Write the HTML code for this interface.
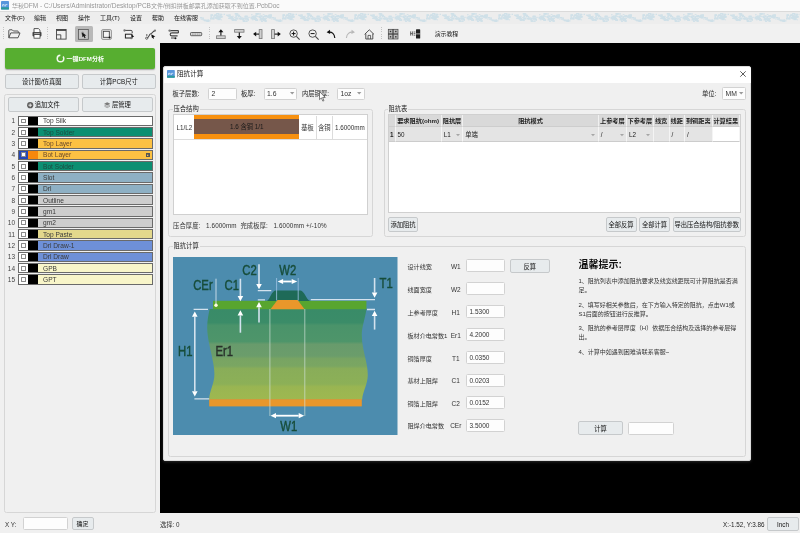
<!DOCTYPE html>
<html lang="zh-CN">
<head>
<meta charset="utf-8">
<title>华秋DFM</title>
<style>
*{box-sizing:border-box;margin:0;padding:0}
html,body{width:800px;height:533px;overflow:hidden;background:#f0f0f0}
body{position:relative;font-family:"Liberation Sans","Noto Sans CJK SC",sans-serif;font-size:6.3px;color:#222;line-height:1}
.a{position:absolute;white-space:nowrap}
.t{position:absolute;white-space:nowrap;line-height:8px;height:8px}
.btn{position:absolute;border:1px solid #c6c9cb;border-radius:2px;background:#e7ebed;text-align:center;white-space:nowrap;color:#111;padding-top:1px}
.inp{position:absolute;background:#fdfdfd;border:1px solid #d2d2d2;border-radius:1.5px;white-space:nowrap;color:#333}
.grp{position:absolute;border:1px solid #d6d6d6;border-radius:2.5px}
.gl{position:absolute;background:#f0f0f0;padding:0 1px;line-height:8px;height:8px;white-space:nowrap;color:#222}
svg{position:absolute;overflow:visible}
.l{font-size:6.55px}
</style>
</head>
<body>
<div id="root" style="position:absolute;left:0;top:0;width:800px;height:533px;will-change:transform;filter:blur(0.35px)">
<div class="a" style="left:0px;top:0px;width:800px;height:11px;background:#fafafa"></div>
<svg style="left:1px;top:1px" width="8" height="8.5" viewBox="0 0 8 8.5"><rect width="8" height="8.5" rx="0.8" fill="#5796dc"/><rect y="6.3" width="8" height="2.2" rx="0.6" fill="#2b9a9a"/><path d="M1.6 5.4V3.6H3.2V5.4M4.6 5.4V3.6H6.4" stroke="#dcecf8" stroke-width="0.8" fill="none"/></svg>
<div class="t" style="left:12px;top:1.5px;color:#969696;font-size:6.0px">华秋<span class="l">DFM - C:/Users/Administrator/Desktop/PCB</span>文件<span class="l">/</span>倒扣拼板邮票孔添加获取不到位置<span class="l">.PcbDoc</span></div>
<div class="a" style="left:0px;top:11px;width:800px;height:13.5px;background:#ededed;border-top:1px solid #dadada;border-bottom:1px solid #dcdcdc"></div>
<svg style="left:200px;top:13px" width="600" height="9" viewBox="0 0 600 9"><defs><pattern id="dz" width="72" height="9" patternUnits="userSpaceOnUse"><g fill="#cfe0e8"><rect x="32.3" y="5.9" width="1.8" height="0.9"/><rect x="34.1" y="4.2" width="1.8" height="0.9"/><rect x="32.3" y="2.7" width="1.3" height="1.8"/><rect x="35.0" y="6.3" width="1.8" height="1.8"/><rect x="30.1" y="4.4" width="1.3" height="0.9"/><rect x="31.0" y="3.2" width="1.3" height="1.3"/><rect x="31.7" y="4.7" width="1.8" height="1.8"/><rect x="17.6" y="2.8" width="2.4" height="1.3"/><rect x="19.3" y="5.2" width="1.3" height="1.8"/><rect x="15.6" y="4.1" width="2.4" height="0.9"/><rect x="14.7" y="4.1" width="3.0" height="0.9"/><rect x="62.7" y="1.2" width="1.8" height="0.9"/><rect x="60.8" y="5.5" width="3.0" height="1.3"/><rect x="58.8" y="4.0" width="2.4" height="1.3"/><rect x="58.9" y="2.7" width="3.0" height="0.9"/><rect x="7.5" y="6.3" width="1.8" height="1.8"/><rect x="10.0" y="4.8" width="1.8" height="1.8"/><rect x="11.0" y="4.7" width="3.0" height="0.9"/><rect x="9.2" y="7.2" width="1.3" height="1.3"/><rect x="61.3" y="8.1" width="1.8" height="0.9"/><rect x="61.7" y="7.9" width="1.3" height="0.9"/><rect x="64.7" y="5.1" width="2.4" height="0.9"/><rect x="63.6" y="5.6" width="2.4" height="1.3"/><rect x="60.1" y="4.6" width="1.8" height="0.9"/><rect x="62.7" y="5.8" width="3.0" height="0.9"/><rect x="64.5" y="6.3" width="1.8" height="1.3"/><rect x="60.6" y="4.9" width="1.8" height="1.8"/><rect x="16.4" y="4.4" width="3.0" height="1.8"/><rect x="15.9" y="0.5" width="1.3" height="0.9"/><rect x="18.0" y="1.4" width="3.0" height="1.3"/><rect x="17.6" y="4.2" width="3.0" height="1.3"/><rect x="18.1" y="4.3" width="1.3" height="0.9"/><rect x="16.6" y="2.7" width="1.3" height="1.3"/><rect x="16.5" y="4.3" width="1.3" height="0.9"/><rect x="16.8" y="2.2" width="1.3" height="0.9"/><rect x="15.1" y="1.5" width="1.8" height="1.3"/><rect x="15.1" y="4.0" width="1.8" height="1.8"/><rect x="10.4" y="1.2" width="2.4" height="1.8"/><rect x="11.7" y="1.3" width="1.3" height="1.3"/><rect x="10.5" y="2.5" width="1.8" height="0.9"/><rect x="10.6" y="3.5" width="1.3" height="1.8"/><rect x="13.9" y="1.7" width="2.4" height="1.3"/><rect x="10.6" y="3.2" width="1.3" height="1.3"/><rect x="68.3" y="2.2" width="3.0" height="1.3"/><rect x="68.4" y="2.1" width="1.3" height="0.9"/><rect x="68.7" y="3.8" width="3.0" height="1.8"/><rect x="67.1" y="3.6" width="3.0" height="1.3"/><rect x="67.8" y="1.8" width="1.3" height="1.3"/><rect x="68.5" y="1.6" width="1.8" height="1.8"/><rect x="66.0" y="2.9" width="3.0" height="1.3"/><rect x="65.4" y="2.0" width="1.8" height="1.3"/><rect x="65.3" y="3.1" width="1.8" height="1.3"/><rect x="64.1" y="2.2" width="3.0" height="0.9"/><rect x="66.4" y="2.8" width="2.4" height="0.9"/><rect x="62.7" y="3.3" width="1.3" height="1.8"/><rect x="2.7" y="6.3" width="1.8" height="1.3"/><rect x="4.0" y="6.5" width="2.4" height="1.8"/><rect x="6.3" y="7.7" width="3.0" height="1.3"/><rect x="2.5" y="4.3" width="1.3" height="1.8"/><rect x="5.7" y="6.7" width="2.4" height="1.8"/><rect x="56.5" y="0.2" width="2.4" height="0.9"/><rect x="58.4" y="2.9" width="1.3" height="1.3"/><rect x="55.0" y="1.8" width="2.4" height="0.9"/><rect x="57.9" y="0.3" width="3.0" height="1.3"/><rect x="55.4" y="0.0" width="3.0" height="1.8"/><rect x="52.8" y="2.6" width="1.8" height="1.3"/><rect x="53.2" y="3.3" width="1.8" height="0.9"/><rect x="51.0" y="4.1" width="3.0" height="0.9"/><rect x="51.2" y="1.1" width="1.3" height="1.3"/><rect x="51.7" y="3.1" width="2.4" height="1.3"/><rect x="50.6" y="4.5" width="1.3" height="1.8"/><rect x="60.9" y="7.3" width="1.3" height="1.3"/><rect x="62.5" y="6.8" width="2.4" height="1.3"/><rect x="64.4" y="7.1" width="2.4" height="1.8"/><rect x="60.3" y="5.2" width="3.0" height="1.3"/><rect x="34.7" y="0.0" width="2.4" height="1.8"/><rect x="36.5" y="0.1" width="1.8" height="1.8"/><rect x="37.1" y="1.7" width="3.0" height="1.3"/><rect x="35.5" y="2.5" width="1.8" height="1.3"/><rect x="38.6" y="3.1" width="2.4" height="1.3"/><rect x="38.8" y="5.0" width="1.8" height="1.3"/><rect x="39.7" y="5.0" width="2.4" height="1.8"/><rect x="37.9" y="2.6" width="1.3" height="1.8"/><rect x="35.4" y="2.4" width="1.3" height="1.8"/><rect x="40.0" y="3.1" width="1.3" height="1.3"/><rect x="35.9" y="1.5" width="3.0" height="1.3"/><rect x="40.0" y="4.3" width="3.0" height="1.3"/><rect x="17.4" y="5.4" width="3.0" height="1.8"/><rect x="16.8" y="2.6" width="1.3" height="1.3"/><rect x="15.9" y="5.2" width="1.3" height="0.9"/><rect x="16.2" y="2.8" width="2.4" height="1.3"/><rect x="18.8" y="2.8" width="3.0" height="0.9"/><rect x="17.7" y="4.3" width="2.4" height="1.8"/><rect x="11.9" y="4.7" width="1.8" height="1.8"/><rect x="12.8" y="4.7" width="1.8" height="1.8"/><rect x="12.8" y="4.3" width="1.8" height="0.9"/><rect x="16.3" y="4.7" width="2.4" height="0.9"/><rect x="13.3" y="3.3" width="1.8" height="0.9"/><rect x="15.6" y="2.8" width="1.3" height="0.9"/><rect x="16.2" y="2.5" width="1.3" height="1.3"/><rect x="28.1" y="4.6" width="1.8" height="1.3"/><rect x="28.6" y="5.0" width="1.3" height="0.9"/><rect x="28.3" y="3.0" width="2.4" height="0.9"/><rect x="29.0" y="4.3" width="2.4" height="1.8"/><rect x="30.4" y="5.1" width="1.3" height="1.3"/><rect x="26.0" y="1.6" width="3.0" height="0.9"/><rect x="26.4" y="2.0" width="1.8" height="0.9"/><rect x="71.7" y="4.5" width="3.0" height="0.9"/><rect x="0.6" y="5.4" width="3.0" height="1.3"/><rect x="71.4" y="5.8" width="2.4" height="0.9"/><rect x="72.0" y="4.1" width="1.8" height="0.9"/><rect x="28.9" y="2.0" width="1.8" height="0.9"/><rect x="29.4" y="1.2" width="1.3" height="1.8"/><rect x="31.3" y="5.1" width="3.0" height="1.8"/><rect x="29.9" y="3.3" width="2.4" height="1.3"/><rect x="28.3" y="1.6" width="1.8" height="1.3"/><rect x="27.5" y="2.5" width="2.4" height="1.3"/><rect x="52.9" y="2.8" width="3.0" height="0.9"/><rect x="52.6" y="2.9" width="1.3" height="0.9"/><rect x="54.0" y="5.6" width="2.4" height="1.3"/><rect x="53.7" y="3.1" width="1.8" height="1.8"/><rect x="53.0" y="3.6" width="3.0" height="1.8"/><rect x="17.8" y="0.0" width="1.3" height="1.8"/><rect x="14.0" y="1.9" width="1.3" height="0.9"/><rect x="16.1" y="0.0" width="2.4" height="1.3"/><rect x="14.2" y="1.4" width="3.0" height="1.8"/><rect x="15.7" y="4.3" width="3.0" height="1.8"/><rect x="13.2" y="2.5" width="1.3" height="1.3"/><rect x="17.5" y="0.6" width="3.0" height="0.9"/><rect x="59.4" y="6.2" width="3.0" height="1.3"/><rect x="61.7" y="4.6" width="2.4" height="1.8"/><rect x="60.5" y="4.9" width="2.4" height="1.8"/><rect x="62.7" y="3.3" width="1.3" height="0.9"/><rect x="62.0" y="4.8" width="3.0" height="1.8"/><rect x="61.1" y="6.0" width="3.0" height="0.9"/><rect x="62.0" y="5.2" width="2.4" height="0.9"/><rect x="63.1" y="3.0" width="3.0" height="1.3"/><rect x="68.1" y="4.1" width="3.0" height="0.9"/><rect x="0.5" y="4.1" width="1.3" height="0.9"/><rect x="70.7" y="2.5" width="1.8" height="0.9"/><rect x="69.4" y="1.2" width="2.4" height="1.3"/><rect x="68.3" y="2.4" width="2.4" height="1.8"/><rect x="70.5" y="2.4" width="1.8" height="1.3"/><rect x="71.2" y="1.6" width="1.3" height="1.8"/><rect x="0.0" y="4.0" width="2.4" height="1.3"/><rect x="20.5" y="3.6" width="2.4" height="0.9"/><rect x="18.0" y="3.8" width="1.8" height="1.8"/><rect x="17.2" y="3.0" width="2.4" height="1.3"/><rect x="19.2" y="5.5" width="1.3" height="0.9"/><rect x="19.8" y="3.0" width="1.3" height="1.8"/><rect x="17.9" y="3.8" width="2.4" height="1.3"/><rect x="19.4" y="3.7" width="2.4" height="1.3"/><rect x="20.8" y="6.4" width="1.3" height="0.9"/><rect x="31.9" y="6.7" width="3.0" height="0.9"/><rect x="31.6" y="6.3" width="2.4" height="1.3"/><rect x="32.4" y="6.7" width="1.8" height="1.3"/><rect x="33.0" y="6.0" width="3.0" height="1.3"/><rect x="30.1" y="3.8" width="3.0" height="1.8"/><rect x="31.3" y="4.4" width="1.3" height="1.8"/><rect x="32.4" y="6.6" width="2.4" height="1.3"/><rect x="35.3" y="4.4" width="2.4" height="1.3"/><rect x="35.4" y="4.8" width="3.0" height="1.8"/><rect x="42.5" y="7.3" width="2.4" height="1.3"/><rect x="41.9" y="5.6" width="1.8" height="0.9"/><rect x="42.1" y="5.4" width="2.4" height="1.8"/><rect x="42.3" y="5.5" width="1.8" height="1.8"/><rect x="43.1" y="7.2" width="1.8" height="1.8"/><rect x="43.1" y="4.6" width="3.0" height="1.3"/><rect x="58.7" y="2.9" width="1.3" height="1.8"/><rect x="60.2" y="2.3" width="2.4" height="1.8"/><rect x="56.4" y="0.8" width="1.3" height="1.3"/><rect x="56.4" y="3.2" width="1.8" height="0.9"/><rect x="54.8" y="4.7" width="2.4" height="1.3"/><rect x="53.2" y="4.0" width="2.4" height="1.8"/><rect x="51.9" y="4.7" width="1.3" height="1.8"/><rect x="54.3" y="2.7" width="2.4" height="0.9"/><rect x="55.2" y="6.2" width="3.0" height="1.8"/><rect x="47.6" y="3.8" width="3.0" height="0.9"/><rect x="44.8" y="2.6" width="3.0" height="1.8"/><rect x="44.4" y="2.8" width="3.0" height="1.8"/><rect x="45.1" y="6.2" width="1.3" height="1.3"/><rect x="23.6" y="0.7" width="1.3" height="1.3"/><rect x="19.8" y="2.0" width="1.3" height="1.3"/><rect x="20.3" y="0.7" width="1.8" height="1.8"/><rect x="20.9" y="3.0" width="1.8" height="1.3"/><rect x="20.6" y="1.1" width="1.8" height="1.3"/><rect x="45.0" y="5.2" width="3.0" height="1.3"/><rect x="45.9" y="7.4" width="1.3" height="1.3"/><rect x="46.9" y="5.8" width="1.8" height="0.9"/><rect x="46.6" y="5.7" width="2.4" height="0.9"/><rect x="45.9" y="5.1" width="1.3" height="1.3"/><rect x="47.2" y="6.0" width="1.8" height="1.8"/><rect x="44.7" y="7.9" width="3.0" height="0.9"/><rect x="46.5" y="4.6" width="1.8" height="1.8"/><rect x="53.6" y="3.1" width="1.8" height="0.9"/><rect x="51.9" y="6.4" width="1.8" height="0.9"/><rect x="51.3" y="3.6" width="1.3" height="1.3"/><rect x="54.4" y="2.8" width="2.4" height="0.9"/><rect x="54.8" y="4.2" width="1.3" height="1.3"/><rect x="51.9" y="4.8" width="3.0" height="0.9"/><rect x="55.6" y="6.6" width="2.4" height="1.3"/><rect x="52.9" y="4.8" width="3.0" height="1.8"/></g></pattern></defs><rect width="600" height="9" fill="url(#dz)"/></svg>
<div class="t" style="left:5px;top:13.5px;color:#111;font-size:6.0px">文件(F)</div>
<div class="t" style="left:34px;top:13.5px;color:#111;font-size:6.0px">编辑</div>
<div class="t" style="left:56px;top:13.5px;color:#111;font-size:6.0px">视图</div>
<div class="t" style="left:78px;top:13.5px;color:#111;font-size:6.0px">操作</div>
<div class="t" style="left:100px;top:13.5px;color:#111;font-size:6.0px">工具(T)</div>
<div class="t" style="left:130px;top:13.5px;color:#111;font-size:6.0px">设置</div>
<div class="t" style="left:152px;top:13.5px;color:#111;font-size:6.0px">帮助</div>
<div class="t" style="left:174px;top:13.5px;color:#111;font-size:6.0px">在线客服</div>
<div class="a" style="left:0px;top:24px;width:800px;height:19px;background:#f1f1f1"></div>
<div class="a" style="left:2.5px;top:27px;width:1px;height:13px;background:repeating-linear-gradient(#c4c4c4 0 1px,transparent 1px 2.2px)"></div>
<div class="a" style="left:46.5px;top:27px;width:1px;height:13px;background:repeating-linear-gradient(#c4c4c4 0 1px,transparent 1px 2.2px)"></div>
<div class="a" style="left:209px;top:27px;width:1px;height:13px;background:repeating-linear-gradient(#c4c4c4 0 1px,transparent 1px 2.2px)"></div>
<div class="a" style="left:380.5px;top:27px;width:1px;height:13px;background:repeating-linear-gradient(#c4c4c4 0 1px,transparent 1px 2.2px)"></div>
<svg style="left:8px;top:28.5px" width="13" height="10" viewBox="0 0 13 10"><path d="M0.8 8.6V1.6Q0.8 0.8 1.6 0.8H4.2L5.4 2H9.6Q10.3 2 10.3 2.8V3.8" fill="none" stroke="#444" stroke-width="0.9"/><path d="M0.8 8.8L2.8 3.9H12L10 8.8Z" fill="none" stroke="#444" stroke-width="0.9" stroke-linejoin="round"/></svg>
<svg style="left:32px;top:28px" width="10" height="11" viewBox="0 0 10 11"><path d="M2 4V0.6H6.4L8 2.2V4" fill="#fff" stroke="#444" stroke-width="0.9"/><rect x="0.5" y="4" width="9" height="4.4" rx="0.8" fill="#444"/><rect x="2" y="6.6" width="6" height="3.6" fill="#fff" stroke="#444" stroke-width="0.8"/><path d="M2.2 5.4H7.8" stroke="#fff" stroke-width="0.6"/></svg>
<svg style="left:56px;top:28.5px" width="11" height="11" viewBox="0 0 11 11"><rect x="0.5" y="0.5" width="9.6" height="9.6" fill="none" stroke="#444" stroke-width="0.9"/><path d="M0.5 1.2H10.1" stroke="#444" stroke-width="1.4"/><path d="M0.5 5.8H4.8V10.1" fill="none" stroke="#444" stroke-width="0.9"/></svg>
<div class="a" style="left:74.5px;top:26px;width:18px;height:15.5px;background:#b9b9b9;border-radius:1.5px"></div>
<svg style="left:78px;top:28.5px" width="11" height="11" viewBox="0 0 11 11"><rect x="0.5" y="0.5" width="9.8" height="9.8" fill="#c6c6c6" stroke="#555" stroke-width="0.8"/><circle cx="4.6" cy="4.2" r="1.6" fill="#999"/><path d="M4 3.4L8.4 6.4L6.6 6.8L7.6 8.8L6.6 9.2L5.7 7.2L4.4 8.2Z" fill="#111"/></svg>
<svg style="left:100.5px;top:28.5px" width="11" height="11" viewBox="0 0 11 11"><rect x="0.5" y="0.5" width="10" height="10" rx="1.6" fill="#dedede" stroke="#8a8a8a" stroke-width="0.8"/><rect x="2.3" y="2.3" width="6" height="6" fill="#f6f6f6" stroke="#3a3a3a" stroke-width="0.85"/><circle cx="8.6" cy="8.5" r="1" fill="#111"/></svg>
<svg style="left:123px;top:28.5px" width="12" height="11" viewBox="0 0 12 11"><path d="M1.4 1.4H8Q9.2 1.4 9.2 2.6V4" fill="none" stroke="#444" stroke-width="1"/><rect x="2.4" y="5.2" width="6.6" height="3.8" fill="none" stroke="#222" stroke-width="1"/><circle cx="1.5" cy="1.5" r="1.15" fill="#777"/><circle cx="8.2" cy="9.2" r="1.1" fill="#777"/><path d="M8.4 5.4L11.2 7.4L8.8 8.4Z" fill="#111"/></svg>
<svg style="left:145px;top:28.5px" width="12" height="11" viewBox="0 0 12 11"><path d="M1.8 9C4.4 8.8 3.6 5.4 5.8 4.8C8 4.2 7.4 2.2 10 1.6" fill="none" stroke="#444" stroke-width="1.1"/><circle cx="1.7" cy="9.2" r="1.1" fill="#eee" stroke="#444" stroke-width="0.8"/><circle cx="1.8" cy="6" r="0.8" fill="#444"/><circle cx="10" cy="1.6" r="1.1" fill="#777"/><path d="M6.2 5.2L10.4 7.4L8.6 8L9 10L6.8 8.6Z" fill="#111"/></svg>
<svg style="left:168px;top:28.5px" width="12" height="11" viewBox="0 0 12 11"><path d="M1.6 1.6H10.4M3.6 3.9H10.4M10.4 1.6V3.9M3.8 3.9Q2.2 4 2.2 5.4Q2.2 6.8 3.8 6.8H9.6" fill="none" stroke="#444" stroke-width="1.15"/><path d="M3 9H6.6" stroke="#444" stroke-width="1"/><circle cx="1.6" cy="1.6" r="1.2" fill="#777"/><circle cx="7.4" cy="9.2" r="1.05" fill="#111"/></svg>
<svg style="left:190px;top:31.6px" width="13" height="5" viewBox="0 0 13 5"><rect x="0.5" y="0.5" width="11.2" height="3.2" rx="0.8" fill="#d8d8d8" stroke="#444" stroke-width="0.8"/><path d="M2 2.1H10.2" stroke="#888" stroke-width="0.7" stroke-dasharray="1.6 0.8"/></svg>
<svg style="left:216px;top:28.5px" width="10" height="11" viewBox="0 0 10 11"><rect x="0.6" y="6.8" width="8.6" height="2.8" fill="#d0d0d0" stroke="#777" stroke-width="0.8"/><path d="M4.9 6.6V2.6" stroke="#111" stroke-width="1.1"/><path d="M4.9 0.2L7.4 3.2H2.4Z" fill="#111"/></svg>
<svg style="left:234px;top:28.5px" width="11" height="11" viewBox="0 0 11 11"><rect x="0.6" y="0.6" width="9.4" height="2.6" fill="#d0d0d0" stroke="#777" stroke-width="0.8"/><path d="M5.3 3.4V7.4" stroke="#111" stroke-width="1.1"/><path d="M5.3 10L7.8 7H2.8Z" fill="#111"/></svg>
<svg style="left:253px;top:28.5px" width="11" height="11" viewBox="0 0 11 11"><rect x="6.2" y="0.6" width="2.8" height="9" fill="#d0d0d0" stroke="#777" stroke-width="0.8"/><path d="M6 5.1H2.6" stroke="#111" stroke-width="1.1"/><path d="M0.1 5.1L3.2 2.7V7.5Z" fill="#111"/></svg>
<svg style="left:271px;top:28.5px" width="11" height="11" viewBox="0 0 11 11"><rect x="0.6" y="0.6" width="2.8" height="9" fill="#d0d0d0" stroke="#777" stroke-width="0.8"/><path d="M3.6 5.1H7.2" stroke="#111" stroke-width="1.1"/><path d="M9.8 5.1L6.7 2.7V7.5Z" fill="#111"/></svg>
<svg style="left:289px;top:28.5px" width="12" height="12" viewBox="0 0 12 12"><circle cx="4.6" cy="4.6" r="3.7" fill="none" stroke="#444" stroke-width="0.9"/><path d="M7.4 7.4L10.6 10.6" stroke="#444" stroke-width="1.1"/><path d="M2.6 4.6H6.6M4.6 2.6V6.6" stroke="#111" stroke-width="1"/></svg>
<svg style="left:308px;top:28.5px" width="12" height="12" viewBox="0 0 12 12"><circle cx="4.6" cy="4.6" r="3.7" fill="none" stroke="#444" stroke-width="0.9"/><path d="M7.4 7.4L10.6 10.6" stroke="#444" stroke-width="1.1"/><path d="M2.6 4.6H6.6" stroke="#111" stroke-width="1"/></svg>
<svg style="left:326px;top:28.5px" width="11" height="11" viewBox="0 0 11 11"><path d="M2.6 3.2C6 2.6 8.6 5 8.8 9" fill="none" stroke="#111" stroke-width="1.2"/><path d="M0.6 3.2L4 0.8L4.2 5Z" fill="#111"/></svg>
<svg style="left:344.5px;top:28.5px" width="11" height="11" viewBox="0 0 11 11"><path d="M8 3.2C4.6 2.6 1.6 5 1.4 9" fill="none" stroke="#b8b8b8" stroke-width="1.1"/><path d="M10 3.2L6.6 0.8L6.4 5Z" fill="#b8b8b8"/></svg>
<svg style="left:363.5px;top:28.5px" width="11" height="11" viewBox="0 0 11 11"><path d="M0.6 5.4L5.3 0.8L10 5.4" fill="none" stroke="#444" stroke-width="0.9" stroke-linejoin="round"/><path d="M1.8 4.6V10H8.8V4.6" fill="none" stroke="#444" stroke-width="0.9"/><path d="M4 10V6.4H6.6V10" fill="none" stroke="#444" stroke-width="0.8"/></svg>
<svg style="left:387.5px;top:29px" width="11" height="11" viewBox="0 0 11 11"><rect x="0.3" y="0.3" width="4.4" height="4.4" fill="#bdbdbd" stroke="#444" stroke-width="0.7"/><rect x="1.8" y="1.8" width="1.4" height="1.4" fill="#333"/><rect x="5.6" y="0.3" width="4.4" height="4.4" fill="#bdbdbd" stroke="#444" stroke-width="0.7"/><rect x="7.1" y="1.8" width="1.4" height="1.4" fill="#333"/><rect x="0.3" y="5.6" width="4.4" height="4.4" fill="#bdbdbd" stroke="#444" stroke-width="0.7"/><rect x="1.8" y="7.1" width="1.4" height="1.4" fill="#333"/><rect x="5.6" y="5.6" width="4.4" height="4.4" fill="#bdbdbd" stroke="#444" stroke-width="0.7"/><rect x="7.1" y="7.1" width="1.4" height="1.4" fill="#333"/></svg>
<svg style="left:410px;top:29px" width="11" height="10" viewBox="0 0 11 10"><rect x="6" y="0.3" width="4.2" height="9.2" rx="0.6" fill="#222"/><path d="M6 4.9H10.2" stroke="#eee" stroke-width="0.7"/><path d="M0.6 2.4V6.6M0.6 4.6H2.4M2.4 2.4V6.6M3.6 3H5.4M3.6 4.6H5.4M3.6 6.2H5.4" stroke="#333" stroke-width="0.7" fill="none"/></svg>
<div class="t" style="left:434.7px;top:30px;color:#111;font-size:5.9px">演示教程</div>

<div class="a" style="left:160px;top:43px;width:640px;height:470px;background:#000"></div>
<div class="a" style="left:5px;top:48px;width:150px;height:20.5px;background:#57ae30;border-radius:2px;box-shadow:0 1px 1.5px rgba(0,0,0,.35)"></div>
<div class="t" style="left:66.5px;top:54.5px;color:#fff;font-weight:bold;font-size:6.1px">一键DFM分析</div>
<svg style="left:55.5px;top:54px" width="9" height="9" viewBox="0 0 9 9"><circle cx="4.5" cy="4.5" r="3.3" fill="none" stroke="#fff" stroke-width="1.5" stroke-dasharray="15 3" opacity="0.92"/></svg>
<div class="btn" style="left:5px;top:74px;width:73.5px;height:14.5px;line-height:12.5px">设计图/仿真图</div>
<div class="btn" style="left:82px;top:74px;width:73.5px;height:14.5px;line-height:12.5px">计算PCB尺寸</div>
<div class="grp" style="left:4px;top:94px;width:152px;height:419px;"></div>
<div class="btn" style="left:8px;top:97px;width:70.5px;height:14.5px;line-height:12.5px"><svg style="position:static;vertical-align:-1.3px;margin-right:1.6px" width="6.4" height="6.4" viewBox="0 0 6.4 6.4"><circle cx="3.2" cy="3.2" r="3.1" fill="#5e5e5e"/><path d="M1.4 3.2H5M3.2 1.4V5" stroke="#f4f4f4" stroke-width="0.9"/></svg>追加文件</div>
<div class="btn" style="left:82px;top:97px;width:70.5px;height:14.5px;line-height:12.5px"><svg style="position:static;vertical-align:-1px;margin-right:2px" width="6.4" height="6" viewBox="0 0 6.4 6"><path d="M3.2 0.2L6.2 1.8L3.2 3.4L0.2 1.8Z" fill="#7a7a7a"/><path d="M0.4 3L3.2 4.5L6 3M0.4 4.2L3.2 5.7L6 4.2" stroke="#8a8a8a" stroke-width="0.7" fill="none"/></svg>层管理</div>
<div class="t" style="left:3px;width:12px;text-align:right;top:117.39999999999999px;font-size:6.5px;color:#444">1</div>
<div class="a" style="left:18px;top:115.6px;width:135px;height:10.4px;border:1px solid #6a6a6a;background:#ffffff"></div>
<div class="a" style="left:19px;top:116.6px;width:8.6px;height:8.4px;background:#fff"></div>
<div class="a" style="left:20.9px;top:118.5px;width:4.8px;height:4.8px;border:0.8px solid #8a8a8a;background:#fff;border-radius:0.5px"></div>
<div class="a" style="left:27.6px;top:116.6px;width:10.4px;height:8.4px;background:#000"></div>
<div class="t" style="left:43px;top:117.3px;font-size:6.6px;color:#3a3a3a">Top Silk</div>
<div class="t" style="left:3px;width:12px;text-align:right;top:128.73000000000002px;font-size:6.5px;color:#444">2</div>
<div class="a" style="left:18px;top:126.93px;width:135px;height:10.4px;border:1px solid #6a6a6a;background:#0c8f72"></div>
<div class="a" style="left:19px;top:127.93px;width:8.6px;height:8.4px;background:#fff"></div>
<div class="a" style="left:20.9px;top:129.83px;width:4.8px;height:4.8px;border:0.8px solid #8a8a8a;background:#fff;border-radius:0.5px"></div>
<div class="a" style="left:27.6px;top:127.93px;width:10.4px;height:8.4px;background:#000"></div>
<div class="t" style="left:43px;top:128.63px;font-size:6.6px;color:#1d4a40">Top Solder</div>
<div class="t" style="left:3px;width:12px;text-align:right;top:140.06px;font-size:6.5px;color:#444">3</div>
<div class="a" style="left:18px;top:138.26px;width:135px;height:10.4px;border:1px solid #6a6a6a;background:#fcc143"></div>
<div class="a" style="left:19px;top:139.26px;width:8.6px;height:8.4px;background:#fff"></div>
<div class="a" style="left:20.9px;top:141.16px;width:4.8px;height:4.8px;border:0.8px solid #8a8a8a;background:#fff;border-radius:0.5px"></div>
<div class="a" style="left:27.6px;top:139.26px;width:10.4px;height:8.4px;background:#000"></div>
<div class="t" style="left:43px;top:139.95999999999998px;font-size:6.6px;color:#6b4a2a">Top Layer</div>
<div class="t" style="left:3px;width:12px;text-align:right;top:151.39000000000001px;font-size:6.5px;color:#444">4</div>
<div class="a" style="left:18px;top:149.59px;width:135px;height:10.4px;border:1px solid #6a6a6a;background:#fcc143"></div>
<div class="a" style="left:19px;top:150.59px;width:8.6px;height:8.4px;background:#2447b8"></div>
<div class="a" style="left:20.9px;top:152.49px;width:4.8px;height:4.8px;border:0.8px solid #8a8a8a;background:#fff;border-radius:0.5px"></div>
<div class="a" style="left:27.6px;top:150.59px;width:10.4px;height:8.4px;background:#f7880c"></div>
<div class="t" style="left:43px;top:151.29px;font-size:6.6px;color:#6b4a2a">Bot Layer</div>
<div class="a" style="left:146px;top:152.79px;width:4px;height:4px;border:0.7px solid #555;background:linear-gradient(#555,#555) 50% 0/0.7px 100% no-repeat,linear-gradient(#555,#555) 0 50%/100% 0.7px no-repeat"></div>
<div class="t" style="left:3px;width:12px;text-align:right;top:162.72px;font-size:6.5px;color:#444">5</div>
<div class="a" style="left:18px;top:160.92px;width:135px;height:10.4px;border:1px solid #6a6a6a;background:#0c8f72"></div>
<div class="a" style="left:19px;top:161.92px;width:8.6px;height:8.4px;background:#fff"></div>
<div class="a" style="left:20.9px;top:163.82px;width:4.8px;height:4.8px;border:0.8px solid #8a8a8a;background:#fff;border-radius:0.5px"></div>
<div class="a" style="left:27.6px;top:161.92px;width:10.4px;height:8.4px;background:#000"></div>
<div class="t" style="left:43px;top:162.61999999999998px;font-size:6.6px;color:#1d4a40">Bot Solder</div>
<div class="t" style="left:3px;width:12px;text-align:right;top:174.05px;font-size:6.5px;color:#444">6</div>
<div class="a" style="left:18px;top:172.25px;width:135px;height:10.4px;border:1px solid #6a6a6a;background:#8eb0c4"></div>
<div class="a" style="left:19px;top:173.25px;width:8.6px;height:8.4px;background:#fff"></div>
<div class="a" style="left:20.9px;top:175.15px;width:4.8px;height:4.8px;border:0.8px solid #8a8a8a;background:#fff;border-radius:0.5px"></div>
<div class="a" style="left:27.6px;top:173.25px;width:10.4px;height:8.4px;background:#000"></div>
<div class="t" style="left:43px;top:173.95px;font-size:6.6px;color:#3a3a3a">Slot</div>
<div class="t" style="left:3px;width:12px;text-align:right;top:185.38000000000002px;font-size:6.5px;color:#444">7</div>
<div class="a" style="left:18px;top:183.58px;width:135px;height:10.4px;border:1px solid #6a6a6a;background:#8eb0c4"></div>
<div class="a" style="left:19px;top:184.58px;width:8.6px;height:8.4px;background:#fff"></div>
<div class="a" style="left:20.9px;top:186.48000000000002px;width:4.8px;height:4.8px;border:0.8px solid #8a8a8a;background:#fff;border-radius:0.5px"></div>
<div class="a" style="left:27.6px;top:184.58px;width:10.4px;height:8.4px;background:#000"></div>
<div class="t" style="left:43px;top:185.28px;font-size:6.6px;color:#3a3a3a">Drl</div>
<div class="t" style="left:3px;width:12px;text-align:right;top:196.71px;font-size:6.5px;color:#444">8</div>
<div class="a" style="left:18px;top:194.91px;width:135px;height:10.4px;border:1px solid #6a6a6a;background:#cdcdcd"></div>
<div class="a" style="left:19px;top:195.91px;width:8.6px;height:8.4px;background:#fff"></div>
<div class="a" style="left:20.9px;top:197.81px;width:4.8px;height:4.8px;border:0.8px solid #8a8a8a;background:#fff;border-radius:0.5px"></div>
<div class="a" style="left:27.6px;top:195.91px;width:10.4px;height:8.4px;background:#000"></div>
<div class="t" style="left:43px;top:196.60999999999999px;font-size:6.6px;color:#3a3a3a">Outline</div>
<div class="t" style="left:3px;width:12px;text-align:right;top:208.04000000000002px;font-size:6.5px;color:#444">9</div>
<div class="a" style="left:18px;top:206.24px;width:135px;height:10.4px;border:1px solid #6a6a6a;background:#cdcdcd"></div>
<div class="a" style="left:19px;top:207.24px;width:8.6px;height:8.4px;background:#fff"></div>
<div class="a" style="left:20.9px;top:209.14000000000001px;width:4.8px;height:4.8px;border:0.8px solid #8a8a8a;background:#fff;border-radius:0.5px"></div>
<div class="a" style="left:27.6px;top:207.24px;width:10.4px;height:8.4px;background:#000"></div>
<div class="t" style="left:43px;top:207.94px;font-size:6.6px;color:#3a3a3a">gm1</div>
<div class="t" style="left:3px;width:12px;text-align:right;top:219.37px;font-size:6.5px;color:#444">10</div>
<div class="a" style="left:18px;top:217.57px;width:135px;height:10.4px;border:1px solid #6a6a6a;background:#cdcdcd"></div>
<div class="a" style="left:19px;top:218.57px;width:8.6px;height:8.4px;background:#fff"></div>
<div class="a" style="left:20.9px;top:220.47px;width:4.8px;height:4.8px;border:0.8px solid #8a8a8a;background:#fff;border-radius:0.5px"></div>
<div class="a" style="left:27.6px;top:218.57px;width:10.4px;height:8.4px;background:#000"></div>
<div class="t" style="left:43px;top:219.26999999999998px;font-size:6.6px;color:#3a3a3a">gm2</div>
<div class="t" style="left:3px;width:12px;text-align:right;top:230.70000000000002px;font-size:6.5px;color:#444">11</div>
<div class="a" style="left:18px;top:228.9px;width:135px;height:10.4px;border:1px solid #6a6a6a;background:#e3d88c"></div>
<div class="a" style="left:19px;top:229.9px;width:8.6px;height:8.4px;background:#fff"></div>
<div class="a" style="left:20.9px;top:231.8px;width:4.8px;height:4.8px;border:0.8px solid #8a8a8a;background:#fff;border-radius:0.5px"></div>
<div class="a" style="left:27.6px;top:229.9px;width:10.4px;height:8.4px;background:#000"></div>
<div class="t" style="left:43px;top:230.6px;font-size:6.6px;color:#3a3a3a">Top Paste</div>
<div class="t" style="left:3px;width:12px;text-align:right;top:242.03px;font-size:6.5px;color:#444">12</div>
<div class="a" style="left:18px;top:240.23px;width:135px;height:10.4px;border:1px solid #6a6a6a;background:#6e90d8"></div>
<div class="a" style="left:19px;top:241.23px;width:8.6px;height:8.4px;background:#fff"></div>
<div class="a" style="left:20.9px;top:243.13px;width:4.8px;height:4.8px;border:0.8px solid #8a8a8a;background:#fff;border-radius:0.5px"></div>
<div class="a" style="left:27.6px;top:241.23px;width:10.4px;height:8.4px;background:#000"></div>
<div class="t" style="left:43px;top:241.92999999999998px;font-size:6.6px;color:#3a3a3a">Drl Draw-1</div>
<div class="t" style="left:3px;width:12px;text-align:right;top:253.36px;font-size:6.5px;color:#444">13</div>
<div class="a" style="left:18px;top:251.56px;width:135px;height:10.4px;border:1px solid #6a6a6a;background:#6e90d8"></div>
<div class="a" style="left:19px;top:252.56px;width:8.6px;height:8.4px;background:#fff"></div>
<div class="a" style="left:20.9px;top:254.46px;width:4.8px;height:4.8px;border:0.8px solid #8a8a8a;background:#fff;border-radius:0.5px"></div>
<div class="a" style="left:27.6px;top:252.56px;width:10.4px;height:8.4px;background:#000"></div>
<div class="t" style="left:43px;top:253.26px;font-size:6.6px;color:#3a3a3a">Drl Draw</div>
<div class="t" style="left:3px;width:12px;text-align:right;top:264.69px;font-size:6.5px;color:#444">14</div>
<div class="a" style="left:18px;top:262.89px;width:135px;height:10.4px;border:1px solid #6a6a6a;background:#f8f5c9"></div>
<div class="a" style="left:19px;top:263.89px;width:8.6px;height:8.4px;background:#fff"></div>
<div class="a" style="left:20.9px;top:265.78999999999996px;width:4.8px;height:4.8px;border:0.8px solid #8a8a8a;background:#fff;border-radius:0.5px"></div>
<div class="a" style="left:27.6px;top:263.89px;width:10.4px;height:8.4px;background:#000"></div>
<div class="t" style="left:43px;top:264.59px;font-size:6.6px;color:#3a3a3a">GPB</div>
<div class="t" style="left:3px;width:12px;text-align:right;top:276.02000000000004px;font-size:6.5px;color:#444">15</div>
<div class="a" style="left:18px;top:274.22px;width:135px;height:10.4px;border:1px solid #6a6a6a;background:#f8f5c9"></div>
<div class="a" style="left:19px;top:275.22px;width:8.6px;height:8.4px;background:#fff"></div>
<div class="a" style="left:20.9px;top:277.12px;width:4.8px;height:4.8px;border:0.8px solid #8a8a8a;background:#fff;border-radius:0.5px"></div>
<div class="a" style="left:27.6px;top:275.22px;width:10.4px;height:8.4px;background:#000"></div>
<div class="t" style="left:43px;top:275.92px;font-size:6.6px;color:#3a3a3a">GPT</div>

<div class="a" style="left:0px;top:513px;width:800px;height:20px;background:#f0f0f0"></div>
<div class="t" style="left:5px;top:520.5px;font-size:6.3px;color:#333">X Y:</div>
<div class="inp" style="left:23px;top:517px;width:44.5px;height:13px;"></div>
<div class="btn" style="left:71.5px;top:517px;width:22px;height:13px;line-height:11px;font-size:6px">确定</div>
<div class="t" style="left:160px;top:520.5px;font-size:6.3px;color:#333">选择: 0</div>
<div class="t" style="left:723px;top:520.5px;font-size:6.3px;color:#222">X:-1.52, Y:3.86</div>
<div class="btn" style="left:767px;top:517px;width:32px;height:13.5px;line-height:11.5px">Inch</div>

<div class="a" style="left:163px;top:66px;width:588px;height:395px;background:#f0f0f0;border:1px solid #dcdcdc;border-radius:2px;box-shadow:0 1px 3px rgba(80,80,80,.5)"></div>
<div class="a" style="left:163.5px;top:66.5px;width:587px;height:16.5px;background:#fff;border-radius:2px 2px 0 0"></div>
<svg style="left:167px;top:70px" width="7.8" height="7.8" viewBox="0 0 8 8"><rect width="8" height="8" rx="0.7" fill="#5796dc"/><rect y="5.9" width="8" height="2.1" rx="0.5" fill="#2b9a9a"/><path d="M1.6 5.1V3.4H3.2V5.1M4.6 5.1V3.4H6.4" stroke="#dcecf8" stroke-width="0.8" fill="none"/></svg>
<div class="t" style="left:177px;top:70px;font-size:6.6px;color:#111">阻抗计算</div>
<svg style="left:740.2px;top:71px" width="6" height="6" viewBox="0 0 6 6"><path d="M0.3 0.3L5.7 5.7M5.7 0.3L0.3 5.7" stroke="#333" stroke-width="0.8" fill="none"/></svg>
<div class="t" style="left:172.5px;top:89.5px;">板子层数:</div>
<div class="inp" style="left:208px;top:87.5px;width:28.5px;height:12px;padding-left:2.5px;line-height:10px;font-size:6.8px">2</div>
<div class="t" style="left:241px;top:89.5px;">板厚:</div>
<div class="inp" style="left:263.5px;top:87.5px;width:33.5px;height:12px;padding-left:2.5px;line-height:10px;font-size:6.8px">1.6</div>
<svg style="left:289.5px;top:92.3px" width="4.4" height="2.4" viewBox="0 0 4.4 2.4"><path d="M0 0H4.4L2.2 2.4Z" fill="#9a9a9a"/></svg>
<div class="t" style="left:302px;top:89.5px;">内层铜厚:</div>
<div class="inp" style="left:337px;top:87.5px;width:27.5px;height:12px;padding-left:2.5px;line-height:10px;font-size:6.8px">1oz</div>
<svg style="left:357.0px;top:92.3px" width="4.4" height="2.4" viewBox="0 0 4.4 2.4"><path d="M0 0H4.4L2.2 2.4Z" fill="#9a9a9a"/></svg>
<svg style="left:319px;top:90.5px" width="7" height="11" viewBox="0 0 7 11"><path d="M0.5 0.5V8.6L2.4 6.9L3.8 10.1L5 9.6L3.6 6.5H6.2Z" fill="#fff" stroke="#333" stroke-width="0.6" stroke-linejoin="round"/></svg>
<div class="t" style="left:702px;top:89.5px;">单位:</div>
<div class="inp" style="left:722px;top:87px;width:24px;height:13px;padding-left:2.5px;line-height:11px;font-size:6.8px">MM</div>
<svg style="left:738.5px;top:92.3px" width="4.4" height="2.4" viewBox="0 0 4.4 2.4"><path d="M0 0H4.4L2.2 2.4Z" fill="#9a9a9a"/></svg>
<div class="grp" style="left:168px;top:109px;width:205px;height:127.5px;"></div>
<div class="gl" style="left:172.5px;top:104.5px">压合结构</div>
<div class="a" style="left:173px;top:114px;width:194.5px;height:100.5px;background:#fff;border:1px solid #d0d0d0"></div>
<div class="a" style="left:174px;top:115px;width:192.5px;height:25px;background:#fff;border-bottom:1px solid #dcdcdc"></div>
<div class="t" style="left:176.5px;top:123.5px;color:#333">L1/L2</div>
<div class="a" style="left:194.3px;top:115.2px;width:105px;height:24px;background:#f7900f"></div>
<div class="a" style="left:194.3px;top:118.8px;width:105px;height:15.6px;background:#76574a"></div>
<div class="t" style="left:230px;top:123px;color:#1a1a1a">1.6 含铜 1/1</div>
<div class="a" style="left:299.3px;top:115.5px;width:17.5px;height:24.5px;border-right:1px solid #dcdcdc;text-align:center;line-height:24px;color:#333">基板</div>
<div class="a" style="left:316.8px;top:115.5px;width:16px;height:24.5px;border-right:1px solid #dcdcdc;text-align:center;line-height:24px;color:#333">含铜</div>
<div class="t" style="left:335px;top:123.5px;color:#333">1.6000mm</div>
<div class="t" style="left:173px;top:221.5px;color:#333;letter-spacing:0.11px">压合厚度:&nbsp;&nbsp; 1.6000mm&nbsp; 完成板厚:&nbsp;&nbsp; 1.6000mm +/-10%</div>
<div class="grp" style="left:384px;top:109px;width:362px;height:127.5px;"></div>
<div class="gl" style="left:387.5px;top:104.5px">阻抗表</div>
<div class="a" style="left:388px;top:114px;width:353px;height:98.5px;background:#fff;border:1px solid #d0d0d0"></div>
<div class="a" style="left:389px;top:115px;width:6.5px;height:12px;background:#d9d9d9;border-right:1px solid #f0f0f0;border-bottom:1px solid #cdcdcd;text-align:center;line-height:11.5px;font-weight:bold;color:#222;font-size:6.2px"></div>
<div class="a" style="left:395.5px;top:115px;width:46.25px;height:12px;background:#d9d9d9;border-right:1px solid #f0f0f0;border-bottom:1px solid #cdcdcd;text-align:center;line-height:11.5px;font-weight:bold;color:#222;font-size:6.2px">要求阻抗(ohm)</div>
<div class="a" style="left:441.75px;top:115px;width:21.5px;height:12px;background:#d9d9d9;border-right:1px solid #f0f0f0;border-bottom:1px solid #cdcdcd;text-align:center;line-height:11.5px;font-weight:bold;color:#222;font-size:6.2px">阻抗层</div>
<div class="a" style="left:463.25px;top:115px;width:135.5px;height:12px;background:#d9d9d9;border-right:1px solid #f0f0f0;border-bottom:1px solid #cdcdcd;text-align:center;line-height:11.5px;font-weight:bold;color:#222;font-size:6.2px">阻抗模式</div>
<div class="a" style="left:598.75px;top:115px;width:28.25px;height:12px;background:#d9d9d9;border-right:1px solid #f0f0f0;border-bottom:1px solid #cdcdcd;text-align:center;line-height:11.5px;font-weight:bold;color:#222;font-size:6.2px">上参考层</div>
<div class="a" style="left:627px;top:115px;width:26.75px;height:12px;background:#d9d9d9;border-right:1px solid #f0f0f0;border-bottom:1px solid #cdcdcd;text-align:center;line-height:11.5px;font-weight:bold;color:#222;font-size:6.2px">下参考层</div>
<div class="a" style="left:653.75px;top:115px;width:15.75px;height:12px;background:#d9d9d9;border-right:1px solid #f0f0f0;border-bottom:1px solid #cdcdcd;text-align:center;line-height:11.5px;font-weight:bold;color:#222;font-size:6.2px">线宽</div>
<div class="a" style="left:669.5px;top:115px;width:15.5px;height:12px;background:#d9d9d9;border-right:1px solid #f0f0f0;border-bottom:1px solid #cdcdcd;text-align:center;line-height:11.5px;font-weight:bold;color:#222;font-size:6.2px">线距</div>
<div class="a" style="left:685px;top:115px;width:27.5px;height:12px;background:#d9d9d9;border-right:1px solid #f0f0f0;border-bottom:1px solid #cdcdcd;text-align:center;line-height:11.5px;font-weight:bold;color:#222;font-size:6.2px">到铜距离</div>
<div class="a" style="left:712.5px;top:115px;width:27.5px;height:12px;background:#d9d9d9;border-right:1px solid #f0f0f0;border-bottom:1px solid #cdcdcd;text-align:center;line-height:11.5px;font-weight:bold;color:#222;font-size:6.2px">计算结果</div>
<div class="a" style="left:389px;top:127px;width:6.5px;height:15px;background:#d9d9d9;border-right:1px solid #f4f4f4;border-bottom:1px solid #ccc;line-height:15px;color:#222;text-align:center;font-weight:bold;">1</div>
<div class="a" style="left:395.5px;top:127px;width:46.25px;height:15px;background:#e4e4e4;border-right:1px solid #f4f4f4;border-bottom:1px solid #ccc;line-height:15px;color:#222;padding-left:2px;">50</div>
<div class="a" style="left:441.75px;top:127px;width:21.5px;height:15px;background:#e4e4e4;border-right:1px solid #f4f4f4;border-bottom:1px solid #ccc;line-height:15px;color:#222;padding-left:2px;">L1</div>
<div class="a" style="left:463.25px;top:127px;width:135.5px;height:15px;background:#e4e4e4;border-right:1px solid #f4f4f4;border-bottom:1px solid #ccc;line-height:15px;color:#222;padding-left:2px;">单端</div>
<div class="a" style="left:598.75px;top:127px;width:28.25px;height:15px;background:#e4e4e4;border-right:1px solid #f4f4f4;border-bottom:1px solid #ccc;line-height:15px;color:#222;padding-left:2px;">/</div>
<div class="a" style="left:627px;top:127px;width:26.75px;height:15px;background:#e4e4e4;border-right:1px solid #f4f4f4;border-bottom:1px solid #ccc;line-height:15px;color:#222;padding-left:2px;">L2</div>
<div class="a" style="left:653.75px;top:127px;width:15.75px;height:15px;background:#e4e4e4;border-right:1px solid #f4f4f4;border-bottom:1px solid #ccc;line-height:15px;color:#222;padding-left:2px;"></div>
<div class="a" style="left:669.5px;top:127px;width:15.5px;height:15px;background:#e4e4e4;border-right:1px solid #f4f4f4;border-bottom:1px solid #ccc;line-height:15px;color:#222;padding-left:2px;">/</div>
<div class="a" style="left:685px;top:127px;width:27.5px;height:15px;background:#e4e4e4;border-right:1px solid #f4f4f4;border-bottom:1px solid #ccc;line-height:15px;color:#222;padding-left:2px;">/</div>
<div class="a" style="left:712.5px;top:127px;width:27.5px;height:15px;background:#fff;border-right:1px solid #f4f4f4;border-bottom:1px solid #ccc;line-height:15px;color:#222;padding-left:2px;"></div>
<svg style="left:456.0px;top:133.6px" width="4" height="2.2" viewBox="0 0 4 2.2"><path d="M0 0H4L2 2.2Z" fill="#a6a6a6"/></svg>
<svg style="left:591.0px;top:133.6px" width="4" height="2.2" viewBox="0 0 4 2.2"><path d="M0 0H4L2 2.2Z" fill="#a6a6a6"/></svg>
<svg style="left:619.5px;top:133.6px" width="4" height="2.2" viewBox="0 0 4 2.2"><path d="M0 0H4L2 2.2Z" fill="#a6a6a6"/></svg>
<svg style="left:646.0px;top:133.6px" width="4" height="2.2" viewBox="0 0 4 2.2"><path d="M0 0H4L2 2.2Z" fill="#a6a6a6"/></svg>
<div class="btn" style="left:388px;top:217px;width:30px;height:14.5px;line-height:12.5px">添加阻抗</div>
<div class="btn" style="left:605.5px;top:217px;width:31px;height:14.5px;line-height:12.5px">全部反算</div>
<div class="btn" style="left:639px;top:217px;width:31px;height:14.5px;line-height:12.5px">全部计算</div>
<div class="btn" style="left:672.5px;top:217px;width:68.5px;height:14.5px;line-height:12.5px">导出压合结构/阻抗参数</div>
<div class="grp" style="left:168px;top:246px;width:578px;height:210.5px;"></div>
<div class="gl" style="left:172.5px;top:241.5px">阻抗计算</div>
<svg style="left:173px;top:257px" width="224.5" height="178" viewBox="173 257 224.5 178">
<defs><linearGradient id="sg" x1="0" y1="0" x2="0" y2="1"><stop offset="0" stop-color="#398b68"/><stop offset="0.15" stop-color="#3b8c68"/><stop offset="0.18" stop-color="#4a936a"/><stop offset="0.36" stop-color="#4e956a"/><stop offset="0.39" stop-color="#689b6c"/><stop offset="0.52" stop-color="#6b9d6b"/><stop offset="0.55" stop-color="#78a463"/><stop offset="0.63" stop-color="#7aa662"/><stop offset="0.66" stop-color="#89ad59"/><stop offset="0.83" stop-color="#8cb057"/><stop offset="0.86" stop-color="#99b552"/><stop offset="1" stop-color="#9eb850"/></linearGradient></defs>
<rect x="173" y="257" width="224.5" height="178" fill="#4c8cae"/>
<path d="M209.6 309 H366.4 C365.5 318 361.8 326 361.8 335 C361.8 350 367.8 362 367.8 375 C367.8 384 362.6 392 362.2 399.4 H209.2 C209.5 390 214.5 384 214.4 374 C214.3 360 207 342 207.2 327 C207.3 320 208.6 314 209.6 309Z" fill="url(#sg)"/>
<rect x="213" y="300.8" width="153.4" height="8.4" fill="#58a52f"/>
<path d="M267 301 C270 299 271.5 291 275.5 290.4 H300.5 C304.5 291 306 299 310 301Z" fill="#1e6a58"/>
<path d="M270.5 309.2 L277.5 300 H297.6 L304.6 309.2Z" fill="#e9972b"/>
<rect x="209.2" y="399.2" width="152.6" height="7.2" fill="#e9972b"/>
<path d="M269.9 309V416M304.8 309V416" stroke="#cfe0d8" stroke-width="0.8" fill="none" opacity="0.85"/>
<path d="M276.0 415.7H298.7" stroke="#fff" stroke-width="1.8" fill="none"/><path d="M270.5 415.7L276.0 413.09999999999997V418.3Z" fill="#fff"/><path d="M304.2 415.7L298.7 413.09999999999997V418.3Z" fill="#fff"/>
<path d="M276.6 278V300.5M298.2 278V300.5" stroke="#9fc4e6" stroke-width="0.8" fill="none"/>
<path d="M283.1 281.5H291.7" stroke="#fff" stroke-width="1.8" fill="none"/><path d="M277.6 281.5L283.1 278.9V284.1Z" fill="#fff"/><path d="M297.2 281.5L291.7 278.9V284.1Z" fill="#fff"/>
<path d="M216 278.7V305" stroke="#d3e2ee" stroke-width="0.9"/><circle cx="216" cy="305.3" r="1.7" fill="#fffbe0"/>
<path d="M240.4 278.7V296.1" stroke="#d3e2ee" stroke-width="1.6" fill="none"/><path d="M240.4 301.3L237.6 296.1H243.20000000000002Z" fill="#fff"/><path d="M240.4 332.7V315.4" stroke="#d3e2ee" stroke-width="1.6" fill="none"/><path d="M240.4 310.2L237.6 315.4H243.20000000000002Z" fill="#fff"/>
<path d="M259 264.3V284.1" stroke="#d3e2ee" stroke-width="1.6" fill="none"/><path d="M259 289.3L256.2 284.1H261.8Z" fill="#fff"/><path d="M259 322.6V307.2" stroke="#d3e2ee" stroke-width="1.6" fill="none"/><path d="M259 302L256.2 307.2H261.8Z" fill="#fff"/>
<path d="M257.8 290.6H271.3M257.8 299.9H265" stroke="#d3e2ee" stroke-width="1.3" fill="none"/>
<path d="M374.6 278V292.6" stroke="#d3e2ee" stroke-width="1.6" fill="none"/><path d="M374.6 297.8L371.8 292.6H377.40000000000003Z" fill="#fff"/><path d="M374.6 329.6V316.0" stroke="#d3e2ee" stroke-width="1.6" fill="none"/><path d="M374.6 310.8L371.8 316.0H377.40000000000003Z" fill="#fff"/>
<path d="M310.8 299.6H375M367 309.5H375" stroke="#d3e2ee" stroke-width="1.3" fill="none"/>
<path d="M194.8 350V316.7" stroke="#d3e2ee" stroke-width="1.6" fill="none"/><path d="M194.8 311.5L192.0 316.7H197.60000000000002Z" fill="#fff"/><path d="M194.8 350V391.3" stroke="#d3e2ee" stroke-width="1.6" fill="none"/><path d="M194.8 396.5L192.0 391.3H197.60000000000002Z" fill="#fff"/>
<path d="M193.6 309.3H208M194.4 398.8H209.2" stroke="#d3e2ee" stroke-width="1.3" fill="none"/>
<text transform="translate(193.2,289.6) scale(1,1.25)" font-family="Liberation Sans, sans-serif" font-size="11.3" fill="#174d3a" stroke="#174d3a" stroke-width="0.35">CEr</text><text transform="translate(224.6,289.6) scale(1,1.25)" font-family="Liberation Sans, sans-serif" font-size="11.3" fill="#174d3a" stroke="#174d3a" stroke-width="0.35">C1</text><text transform="translate(242.3,275.2) scale(1,1.25)" font-family="Liberation Sans, sans-serif" font-size="11.3" fill="#174d3a" stroke="#174d3a" stroke-width="0.35">C2</text><text transform="translate(279.3,275.3) scale(1,1.25)" font-family="Liberation Sans, sans-serif" font-size="11.3" fill="#174d3a" stroke="#174d3a" stroke-width="0.35">W2</text><text transform="translate(379.6,287.6) scale(1,1.25)" font-family="Liberation Sans, sans-serif" font-size="11.3" fill="#174d3a" stroke="#174d3a" stroke-width="0.35">T1</text><text transform="translate(178,355.9) scale(1,1.25)" font-family="Liberation Sans, sans-serif" font-size="11.3" fill="#174d3a" stroke="#174d3a" stroke-width="0.35">H1</text><text transform="translate(215.4,355.9) scale(1,1.25)" font-family="Liberation Sans, sans-serif" font-size="11.3" fill="#28302a" stroke="#28302a" stroke-width="0.35">Er1</text><text transform="translate(280.3,431) scale(1,1.25)" font-family="Liberation Sans, sans-serif" font-size="11.3" fill="#174d3a" stroke="#174d3a" stroke-width="0.35">W1</text>
</svg>
<div class="t" style="left:407.5px;top:262.9px;color:#333;font-size:6.1px">设计线宽</div>
<div class="t" style="left:446px;width:19.5px;text-align:center;top:262.8px;color:#333;font-size:6.5px">W1</div>
<div class="inp" style="left:465.5px;top:259px;width:39.5px;height:13.4px;padding-left:3px;line-height:12.6px;font-size:6.5px"></div>
<div class="t" style="left:407.5px;top:286.0px;color:#333;font-size:6.1px">线面宽度</div>
<div class="t" style="left:446px;width:19.5px;text-align:center;top:285.9px;color:#333;font-size:6.5px">W2</div>
<div class="inp" style="left:465.5px;top:282px;width:39.5px;height:13.4px;padding-left:3px;line-height:12.6px;font-size:6.5px"></div>
<div class="t" style="left:407.5px;top:309.1px;color:#333;font-size:6.1px">上参考厚度</div>
<div class="t" style="left:446px;width:19.5px;text-align:center;top:309.0px;color:#333;font-size:6.5px">H1</div>
<div class="inp" style="left:465.5px;top:305px;width:39.5px;height:13.4px;padding-left:3px;line-height:12.6px;font-size:6.5px">1.5300</div>
<div class="t" style="left:407.5px;top:332.3px;color:#333;font-size:6.1px">板材介电常数1</div>
<div class="t" style="left:446px;width:19.5px;text-align:center;top:332.2px;color:#333;font-size:6.5px">Er1</div>
<div class="inp" style="left:465.5px;top:328px;width:39.5px;height:13.4px;padding-left:3px;line-height:12.6px;font-size:6.5px">4.2000</div>
<div class="t" style="left:407.5px;top:354.8px;color:#333;font-size:6.1px">铜箔厚度</div>
<div class="t" style="left:446px;width:19.5px;text-align:center;top:354.7px;color:#333;font-size:6.5px">T1</div>
<div class="inp" style="left:465.5px;top:351px;width:39.5px;height:13.4px;padding-left:3px;line-height:12.6px;font-size:6.5px">0.0350</div>
<div class="t" style="left:407.5px;top:377.3px;color:#333;font-size:6.1px">基材上阻焊</div>
<div class="t" style="left:446px;width:19.5px;text-align:center;top:377.2px;color:#333;font-size:6.5px">C1</div>
<div class="inp" style="left:465.5px;top:374px;width:39.5px;height:13.4px;padding-left:3px;line-height:12.6px;font-size:6.5px">0.0203</div>
<div class="t" style="left:407.5px;top:399.9px;color:#333;font-size:6.1px">铜箔上阻焊</div>
<div class="t" style="left:446px;width:19.5px;text-align:center;top:399.8px;color:#333;font-size:6.5px">C2</div>
<div class="inp" style="left:465.5px;top:396px;width:39.5px;height:13.4px;padding-left:3px;line-height:12.6px;font-size:6.5px">0.0152</div>
<div class="t" style="left:407.5px;top:422.4px;color:#333;font-size:6.1px">阻焊介电常数</div>
<div class="t" style="left:446px;width:19.5px;text-align:center;top:422.3px;color:#333;font-size:6.5px">CEr</div>
<div class="inp" style="left:465.5px;top:419px;width:39.5px;height:13.4px;padding-left:3px;line-height:12.6px;font-size:6.5px">3.5000</div>
<div class="btn" style="left:510px;top:259px;width:39.5px;height:14px;line-height:12px">反算</div>
<div class="t" style="left:578.5px;top:258.5px;font-size:10px;font-weight:bold;color:#111;line-height:11px;height:11px">温馨提示:</div>
<div class="t" style="left:578.5px;top:277px;color:#333;font-size:6.0px">1、阻抗列表中添加阻抗要求及线宽线距既可计算阻抗是否满</div>
<div class="t" style="left:578.5px;top:285.5px;color:#333;font-size:6.0px">足。</div>
<div class="t" style="left:578.5px;top:300.5px;color:#333;font-size:6.0px">2、填写好相关参数后，在下方输入特定的阻抗，点击W1或</div>
<div class="t" style="left:578.5px;top:309.5px;color:#333;font-size:6.0px">S1后面的按钮进行反推算。</div>
<div class="t" style="left:578.5px;top:323.5px;color:#333;font-size:6.0px">3、阻抗的参考层厚度（H）依据压合结构及选择的参考层得</div>
<div class="t" style="left:578.5px;top:332.5px;color:#333;font-size:6.0px">出。</div>
<div class="t" style="left:578.5px;top:347.5px;color:#333;font-size:6.0px">4、计算中如遇到困难请联系客服~</div>
<div class="btn" style="left:578px;top:421px;width:45px;height:14px;line-height:12px">计算</div>
<div class="inp" style="left:628px;top:422px;width:45.5px;height:12.5px;"></div>

</div>
</body>
</html>
